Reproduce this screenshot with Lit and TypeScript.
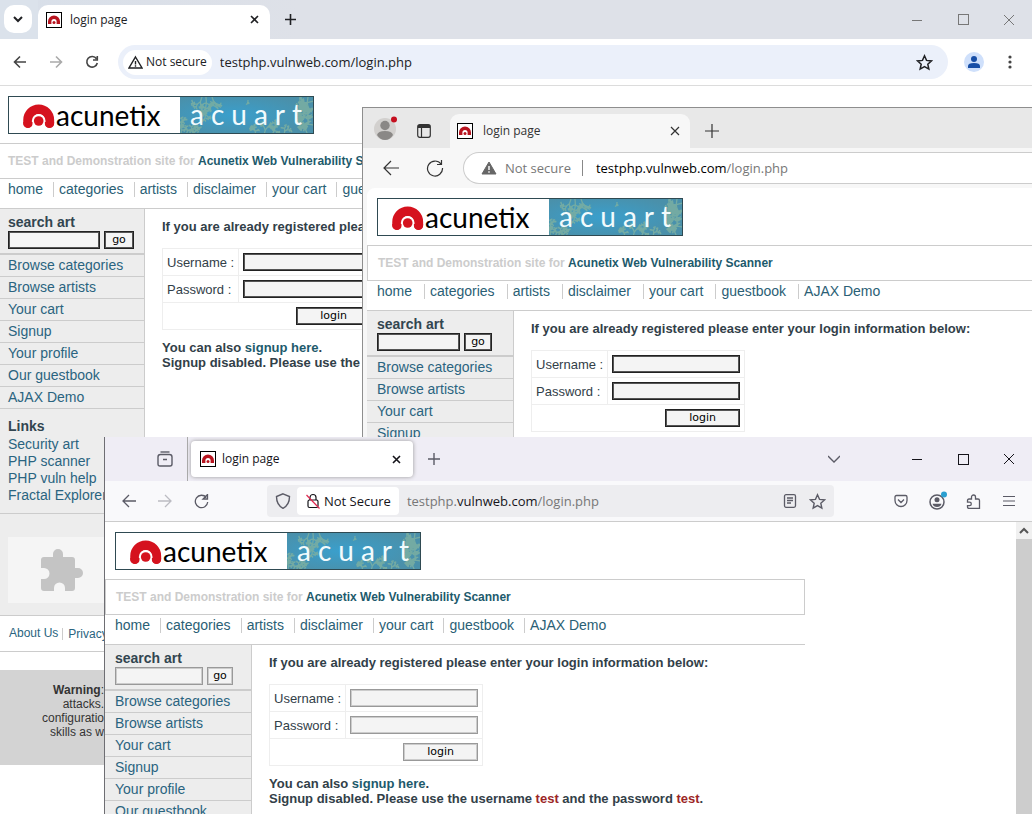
import { LitElement, html, svg, css, nothing } from "lit";
import { customElement, property } from "lit/decorators.js";

const ui = css`
  * { box-sizing: border-box; }
  button { border: 0; padding: 0; background: none; color: inherit; font: inherit; display: flex; align-items: center; justify-content: center; flex: none; }
  svg { display: block; flex: none; }
  .chrome { font-family: "Open Sans", "Noto Sans", sans-serif; font-size: 12px; line-height: 16px; color: #202124; white-space: nowrap; }
  .row { display: flex; align-items: center; }
  .grow { flex: 1; min-width: 0; }
  .url { border: 0; outline: 0; padding: 0; background: none; color: inherit; font-family: "Open Sans", "Noto Sans", sans-serif; font-size: 13px; line-height: 18px; flex: 1; min-width: 0; }
`;

const icon = (size: number, body: unknown, sw = 1) => html`<svg width=${size} height=${size} viewBox="0 0 ${size} ${size}" fill="none" stroke="currentColor" stroke-width=${sw} aria-hidden="true">${body}</svg>`;

const favicon = html`<svg width="16" height="16" viewBox="0 0 16 16" aria-hidden="true">
  <rect x=".5" y=".5" width="15" height="15" fill="#fff" stroke="#000"/>
  <path d="M3.700 12V9.500a4.300 4.300 0 0 1 8.600 0V12" fill="none" stroke="#b8141f" stroke-width="3.400"/>
  <circle cx="8" cy="10.400" r="1.500" fill="#b8141f"/></svg>`;

const cross = (s: number, sw: number) => icon(s, svg`<path d="M1 1L${s - 1} ${s - 1}M${s - 1} 1L1 ${s - 1}"/>`, sw);
const plus = (s: number, sw: number) => icon(s, svg`<path d="M${s / 2} 0V${s}M0 ${s / 2}H${s}"/>`, sw);
const dash = icon(10, svg`<path d="M0 5.500H10"/>`);
const box = icon(11, svg`<rect x=".5" y=".5" width="10" height="10"/>`);
const star = (s: number, sw: number) => html`<svg width=${s} height=${s} viewBox="0 0 16 16" fill="none" stroke="currentColor" stroke-width=${sw} stroke-linejoin="miter" aria-hidden="true"><path d="M8 1.700l1.900 4.300 4.700.5-3.500 3.100 1 4.600L8 11.800l-4.100 2.400 1-4.600L1.400 6.500 6.100 6z"/></svg>`;

/* Branching growth used for the texture of the banner. */
const fractal = (() => {
  let seed = 7;
  const rnd = () => (seed = (seed * 16807) % 2147483647) / 2147483647;
  let d = "";
  const grow = (x: number, y: number, a: number, len: number) => {
    if (len < 0.8) return;
    const nx = x + Math.cos(a) * len, ny = y + Math.sin(a) * len;
    d += `M${x.toFixed(1)} ${y.toFixed(1)}L${nx.toFixed(1)} ${ny.toFixed(1)}`;
    grow(nx, ny, a + (rnd() - 0.3) * 1.4, len * 0.74);
    grow(nx, ny, a - (rnd() - 0.1) * 1.6, len * 0.66);
    if (rnd() > 0.5) grow(nx, ny, a + 1.4, len * 0.5);
  };
  const roots = [[1, 38, -1.5, 5], [6, 38, -1.2, 5], [12, 38, -0.8, 4], [0, 26, -0.6, 3], [22, 0, 1.9, 5], [26, 0, 1.5, 6], [32, 0, 1.2, 5], [27, 14, 1.9, 4], [76, 38, -1.8, 4], [84, 38, -1.3, 5], [92, 38, -1.1, 5], [68, 3, 1.6, 2], [134, 4, 2.9, 6], [134, 12, 3.0, 6], [134, 20, 3.2, 6], [134, 28, 3.3, 6], [128, 38, -2, 5], [120, 0, 1.6, 5], [128, 0, 1.7, 6], [104, 38, -1.4, 4]];
  for (const [x, y, a, l] of roots) grow(x, y, a, l);
  return d;
})();

@customElement("shop-page")
class ShopPage extends LitElement {
  @property({ type: Boolean }) full = false;

  static styles = css`
    * { box-sizing: border-box; }
    :host { display: block; background: #fff; color: #333; font-family: "Liberation Sans", Arial, sans-serif; font-size: 13px; line-height: 15px; white-space: nowrap; overflow: hidden; --pad: 10px; --side: 147px; --find: 88px; --go: 26px; --gap: 10px; --line: #222; --soft: #555; }
    :host(.first) { --pad: 8px; --side: 145px; --find: 92px; --go: 30px; }
    :host(.first) .tag { border-left: 0; }
    :host(.second) { --find: 83px; --go: 28px; --gap: 12px; }
    :host(.third) { --line: #999; --soft: #ccc; }
    a { color: #2a6480; text-decoration: none; }
    .page { width: 700px; }
    .logo { display: flex; width: 306px; height: 38px; margin: 10px 0 9px var(--pad); border: 1px solid #2f4a52; }
    .left { flex: 1; display: flex; align-items: center; padding-left: 13px; color: #000; font: 28px/32px Lato, sans-serif; }
    .right { display: grid; width: 133px; background: #3f97bd; overflow: hidden; }
    .right > * { grid-area: 1 / 1; }
    .art { color: #f2fbfd; font: 28px/34px Lato, sans-serif; letter-spacing: 7px; padding-left: 10px; }
    svg { display: block; flex: none; }
    .tag { height: 36px; border: 1px solid #ccc; display: flex; align-items: center; padding-left: var(--pad); font-weight: bold; font-size: 12px; color: #ccc; white-space: pre; }
    .tag a { color: #1d5a6c; }
    .nav { display: flex; height: 30px; padding: 3px 0 0 var(--pad); border-bottom: 1px solid #ccc; font-size: 14px; }
    .nav a { height: 15px; padding-right: var(--gap); margin-right: 5px; border-right: 1px solid #ccc; color: #2a6075; }
    .nav a:last-child { border: 0; }
    .cols { display: flex; align-items: flex-start; }
    .side { width: var(--side); flex: none; background: #ededed; border-right: 1px solid #ccc; font-size: 14px; line-height: 17px; }
    .search { height: 46px; border-bottom: 2px solid #ccc; padding: 5px 0 0 var(--pad); }
    h2 { margin: 0; font-size: 14px; line-height: 17px; color: #324550; }
    .find { display: flex; gap: 4px; }
    .find input { width: var(--find); }
    .find button { width: var(--go); }
    input, button { height: 18px; margin: 0; padding: 0; border: 1px solid var(--line); border-radius: 0; background: #f4f4f4; box-shadow: inset 0 0 0 1px var(--soft); color: #000; font: 11px/14px "DejaVu Sans", sans-serif; }
    .list { list-style: none; margin: 0; padding: 0; }
    .list li { height: 22px; padding: 2px 0 0 var(--pad); border-bottom: 1px solid #ccc; }
    .links { padding: 8px 0 8px var(--pad); height: 105px; border-bottom: 1px solid #ccc; }
    .links h2 { line-height: 19px; }
    .links a { display: block; line-height: 17px; }
    .plug { height: 102px; padding: 23px 0 0 8px; border-bottom: 1px solid #ccc; }
    .plug div { height: 66px; background: #f5f5f5; display: flex; justify-content: center; align-items: center; padding-right: 28px; }
    .main { padding: 10px 0 0 17px; font-weight: bold; color: #324048; }
    p { margin: 0; }
    table { border-collapse: collapse; margin: 14px 0 10px; font-weight: normal; }
    td { border: 1px solid #eee; height: 27px; padding: 0 4px; }
    td input { display: block; width: 128px; }
    td button { display: block; width: 75px; margin-left: auto; }
    .main a { color: #1d5a6c; }
    .red { color: #9c2626; }
    .foot { height: 36px; border-bottom: 1px solid #ccc; display: flex; align-items: center; padding-left: 9px; font-size: 12px; }
    .foot a + a { border-left: 1px solid #ccc; margin-left: 4px; padding-left: 5px; line-height: 12px; }
    .warn { margin-top: 18px; padding-top: 13px; height: 95px; background: #d3d3d3; font-size: 12px; line-height: 14px; }
    .warn p { width: 104px; text-align: right; }
  `;

  render() {
    const sections = ["Browse categories", "Browse artists", "Your cart", "Signup", "Your profile", "Our guestbook", "AJAX Demo"];
    return html`<div class="page">
      <div class="logo">
        <div class="left">
          <svg width="34" height="30" viewBox="0 0 34 30" aria-hidden="true">
            <path d="M6 23V20a10.700 10.700 0 0 1 21.400 0V23" fill="none" stroke="#d5121e" stroke-width="9.500" stroke-linecap="round"/>
            <path d="M9.900 29V20.800a6.800 6.800 0 0 1 13.600 0V29z" fill="#fff"/>
            <path d="M1.300 22h9.200v2a4.600 4 0 0 1-9.200 0zM22.900 22h9.200v2a4.600 4 0 0 1-9.200 0z" fill="#d5121e"/>
            <circle cx="16.700" cy="21" r="4.800" fill="#d5121e"/>
          </svg><span>acunetix</span>
        </div>
        <div class="right">
          <svg width="133" height="36" viewBox="0 0 133 36" aria-hidden="true">
            <defs><radialGradient id="g" cx=".4" cy=".5" r=".6"><stop offset="0" stop-color="#3a9fcc"/><stop offset="1" stop-color="#4a90aa"/></radialGradient></defs>
            <rect width="133" height="36" fill="url(#g)"/>
            <path d=${fractal} stroke="#78ada2" stroke-width="1.300" fill="none" opacity=".9"/>
          </svg>
          <span class="art">acuart</span>
        </div>
      </div>
      <div class="tag">TEST and Demonstration site for <a href="#">Acunetix Web Vulnerability Scanner</a></div>
      <nav class="nav">${["home", "categories", "artists", "disclaimer", "your cart", "guestbook", "AJAX Demo"].map((t) => html`<a href="#">${t}</a>`)}</nav>
      <div class="cols">
        <div class="side">
          <div class="search"><h2 id="s">search art</h2><div class="find"><input type="text" aria-labelledby="s" /><button>go</button></div></div>
          <ul class="list">${sections.map((t) => html`<li><a href="#">${t}</a></li>`)}</ul>
          ${this.full ? html`<div class="links"><h2>Links</h2>${["Security art", "PHP scanner", "PHP vuln help", "Fractal Explorer"].map((t) => html`<a href="#">${t}</a>`)}</div>
          <div class="plug"><div><svg width="46" height="46" viewBox="0 0 46 46" fill="#c4c4c4" aria-hidden="true"><path d="M5 10H14V7a5 5 0 0 1 10 0V10H33q3 0 3 3V21H39a5 5 0 0 1 0 10H36V41q0 3-3 3H26V41a5.500 5.500 0 0 0-11 0V44H5q-3 0-3-3V32H5a5.500 5.500 0 0 0 0-11H2V13q0-3 3-3z"/></svg></div></div>` : nothing}
        </div>
        <div class="main">
          <p>If you are already registered please enter your login information below:</p>
          <table>
            <tr><td><label for="u">Username :</label></td><td><input id="u" type="text" /></td></tr>
            <tr><td><label for="p">Password :</label></td><td><input id="p" type="password" /></td></tr>
            <tr><td colspan="2"><button>login</button></td></tr>
          </table>
          <p>You can also <a href="#">signup here</a>.</p>
          <p>Signup disabled. Please use the username <span class="red">test</span> and the password <span class="red">test</span>.</p>
        </div>
      </div>
      ${this.full ? html`<div class="foot"><a href="#">About Us</a><a href="#">Privacy Policy</a></div>
      <div class="warn"><p><b>Warning</b>:</p><p>attacks.</p><p>configuratio</p><p>skills as w</p></div>` : nothing}
    </div>`;
  }
}

@customElement("chrome-window")
class ChromeWindow extends LitElement {
  static styles = [ui, css`
    :host { display: flex; flex-direction: column; background: #fff; }
    .strip { height: 39px; background: linear-gradient(90deg, #d8dfe9, #dee1e8 300px); }
    .menu { width: 38px; height: 39px; background: #dbe2eb; padding: 5px 0 0 4px; }
    .menu button { width: 28px; height: 28px; border-radius: 10px; background: #fff; }
    .tab { width: 232px; height: 34px; align-self: flex-end; background: #fff; border-radius: 10px 10px 0 0; padding: 0 11px 5px 8px; gap: 8px; }
    .new { width: 40px; }
    .ctl { width: 46px; height: 39px; color: #777; }
    .bar { height: 47px; border-bottom: 1px solid #dcdcdc; background: #fff; padding: 0 12px 0 2px; }
    .nav { width: 36px; color: #444; }
    .off { color: #aaa; }
    .omni { height: 34px; border-radius: 17px; background: #ebf0fa; margin-left: 8px; padding: 0 15px 0 5px; }
    .chip { height: 25px; border-radius: 13px; background: #fff; padding: 0 5px; gap: 3px; margin-right: 8px; }
    .me { width: 20px; height: 20px; border-radius: 10px; background: #cfe0fb; margin: 0 16px; color: #174ea6; }
    .dots { width: 20px; }
  `];
  render() {
    return html`<div class="chrome">
      <div class="strip row">
        <div class="menu"><button aria-label="Search tabs">${icon(10, svg`<path d="M1 3l4 4 4-4"/>`, 2)}</button></div>
        <div class="tab row">${favicon}<span class="grow">login page</span><button aria-label="Close tab">${cross(9, 1.6)}</button></div>
        <button class="new" aria-label="New tab">${plus(11, 1.6)}</button><span class="grow"></span>
        <button class="ctl" aria-label="Minimize">${dash}</button><button class="ctl" aria-label="Maximize">${box}</button><button class="ctl" aria-label="Close">${cross(12, 1)}</button>
      </div>
      <div class="bar row">
        <button class="nav" aria-label="Back">${icon(14, svg`<path d="M13 7H2M7 1.500L1.500 7 7 12.500"/>`, 1.6)}</button>
        <button class="nav off" aria-label="Forward">${icon(14, svg`<path d="M1 7H12M7 1.500L12.500 7 7 12.500"/>`, 1.6)}</button>
        <button class="nav" aria-label="Reload">${icon(14, svg`<path d="M11.500 3.800A5.300 5.300 0 1 0 12.300 8M12.300 1v4H8"/>`, 1.6)}</button>
        <div class="omni row grow">
          <button class="chip row">${icon(15, svg`<path d="M7.500 2L14 13H1zM7.500 6v3.500M7.500 10.300v1.500"/>`, 1.4)}Not secure</button>
          <input class="url" aria-label="Address" .value=${"testphp.vulnweb.com/login.php"} />
          <button aria-label="Bookmark">${star(17, 1.4)}</button>
        </div>
        <button class="me" aria-label="Profile"><svg width="12" height="12" fill="currentColor" aria-hidden="true"><circle cx="6" cy="3" r="3"/><path d="M0 12V10q0-3 6-3t6 3v2z"/></svg></button>
        <button class="dots" aria-label="Menu"><svg width="4" height="14" fill="#444" aria-hidden="true"><circle cx="2" cy="2" r="1.600"/><circle cx="2" cy="7" r="1.600"/><circle cx="2" cy="12" r="1.600"/></svg></button>
      </div>
    </div>
    <shop-page class="first" full></shop-page>`;
  }
}

@customElement("edge-window")
class EdgeWindow extends LitElement {
  static styles = [ui, css`
    :host { display: flex; flex-direction: column; overflow: hidden; background: #f7f7f7; border: 1px solid #8e8e8e; border-width: 1px 0 0 1px; }
    .strip { height: 40px; background: #e8e8e8; color: #333; }
    .me { width: 44px; height: 40px; }
    .side { width: 33px; margin-right: 10px; padding-top: 6px; }
    .tab { height: 34px; width: 240px; align-self: flex-end; background: #f7f7f7; border-radius: 9px 9px 0 0; padding: 0 10px 0 7px; gap: 10px; }
    .new { width: 44px; padding-top: 6px; }
    .bar { height: 40px; }
    .nav { width: 44px; color: #333; }
    .back { margin-left: 6px; }
    .omni { height: 32px; border: 1px solid #ccc; border-right: 0; border-radius: 16px 0 0 16px; background: #fff; margin-left: 6px; padding-left: 17px; color: #000; }
    .state { gap: 8px; font-size: 13px; color: #777; padding-right: 11px; border-right: 1px solid #888; height: 16px; margin-right: 13px; }
    .url span { color: #777; }
    .view { margin-left: 4px; border-radius: 8px 0 0 0; overflow: hidden; }
  `];
  render() {
    return html`<div class="chrome">
      <div class="strip row">
        <button class="me" aria-label="Profile"><svg width="26" height="24" aria-hidden="true"><circle cx="13" cy="13" r="11" fill="#d2d0ce"/><circle cx="13" cy="9.500" r="4.700" fill="#8a8886"/><path d="M5 19q1-4 8-4t8 4q-3 5-8 5t-8-5z" fill="#8a8886"/><circle cx="22" cy="3.500" r="3" fill="#c50f1f"/></svg></button>
        <button class="side" aria-label="Tab actions">${icon(14, svg`<rect x=".7" y=".7" width="12.600" height="12.600" rx="2"/><path d="M1 2.500H13" stroke-width="3"/><path d="M4.500 4V13"/>`, 1.2)}</button>
        <div class="tab row">${favicon}<span class="grow">login page</span><button aria-label="Close tab">${cross(10, 1.2)}</button></div>
        <button class="new" aria-label="New tab">${plus(14, 1.2)}</button>
      </div>
      <div class="bar row">
        <button class="nav back" aria-label="Back">${icon(16, svg`<path d="M16 8H1M8 1L1 8l7 7"/>`, 1.2)}</button>
        <button class="nav" aria-label="Reload">${icon(18, svg`<path d="M15 5A7.500 7.500 0 1 0 16.500 9M15.500 1v4.500H11"/>`, 1.2)}</button>
        <div class="omni row grow">
          <span class="state row"><svg width="16" height="14" aria-hidden="true"><path d="M8 1L15 13H1z" fill="#666" stroke="#666" stroke-linejoin="round"/><path d="M8 5v4M8 10.300v1.500" stroke="#fff" stroke-width="1.400"/></svg>Not secure</span>
          <div class="url" role="textbox" contenteditable="true" aria-label="Address">testphp.vulnweb.com<span>/login.php</span></div>
        </div>
      </div>
    </div>
    <div class="view"><shop-page class="second"></shop-page></div>`;
  }
}

@customElement("fox-window")
class FoxWindow extends LitElement {
  static styles = [ui, css`
    :host { display: flex; flex-direction: column; overflow: hidden; background: #fff; border-left: 1px solid #6e6e73; color: #5b5b66; }
    .strip { height: 44px; background: #efedf5; color: #15141a; }
    .view { width: 83px; height: 44px; border-right: 1px solid #aaa; padding-left: 52px; color: #5b5b66; }
    .tab { width: 222px; height: 36px; margin-left: 3px; background: #fff; border-radius: 4px; box-shadow: 0 0 4px #999; padding: 0 12px 0 9px; gap: 6px; }
    .new { width: 42px; color: #5b5b66; }
    .all { width: 40px; margin-right: 40px; color: #5b5b66; }
    .ctl { width: 46px; height: 44px; }
    .bar { height: 41px; background: #f9f9fb; border-bottom: 1px solid #ccc; color: #5b5b66; padding-left: 6px; padding-right: 5px; }
    .nav { width: 36px; }
    .off { color: #bcbcc2; }
    .omni { height: 32px; background: #ededf0; border-radius: 4px; padding: 0 8px; margin: 0 48px; flex: 0 1 567px; }
    .chip { height: 28px; border-radius: 4px; background: #fff; padding: 0 8px; gap: 3px; font-size: 13px; color: #15141a; margin: 0 8px 0 6px; }
    .url { color: #777; }
    .url span { color: #15141a; }
    .pair { gap: 12px; }
    .tools button { width: 36px; }
    .body { flex: 1; min-height: 0; display: flex; }
    .scroll { width: 16px; background: #cdcdcd; }
    .up { width: 16px; height: 17px; background: #f0f0f0; color: #555; }
  `];
  render() {
    return html`<div class="chrome">
      <div class="strip row">
        <div class="view row"><button aria-label="Recent browsing">${icon(16, svg`<path d="M3.500 1H12.500"/><path d="M1 6Q1 3.500 3.500 3.500H12.500Q15 3.500 15 6V13Q15 15 13 15H3Q1 15 1 13zM6 8.500H10"/>`, 1.4)}</button></div>
        <div class="tab row">${favicon}<span class="grow">login page</span><button aria-label="Close tab">${cross(9, 1.6)}</button></div>
        <button class="new" aria-label="New tab">${plus(12, 1.4)}</button><span class="grow"></span>
        <button class="all" aria-label="List all tabs">${icon(12, svg`<path d="M0 3l6 6 6-6"/>`, 1.3)}</button>
        <button class="ctl" aria-label="Minimize">${dash}</button><button class="ctl" aria-label="Maximize">${box}</button><button class="ctl" aria-label="Close">${cross(12, 1)}</button>
      </div>
      <div class="bar row">
        <button class="nav" aria-label="Back">${icon(14, svg`<path d="M14 7H1M7 1L1 7l6 6"/>`, 1.3)}</button>
        <button class="nav off" aria-label="Forward">${icon(14, svg`<path d="M0 7H13M7 1L13 7l-6 6"/>`, 1.3)}</button>
        <button class="nav" aria-label="Reload">${icon(15, svg`<path d="M12.300 3.500A6.200 6.200 0 1 0 13.700 8M13.500 .5V5H9z"/>`, 1.3)}</button>
        <div class="omni row">
          ${icon(16, svg`<path d="M8 .8L14.500 3.500Q14.500 12 8 15.300 1.500 12 1.500 3.500z"/>`, 1.4)}
          <button class="chip row">${icon(16, svg`<path d="M5 7V4.500a3 3 0 0 1 6 0V7"/><rect x="3" y="7" width="10" height="7.500" rx="1.500"/><path d="M1.500 2L14.500 15.500" stroke="#e22850"/>`, 1.2)}Not Secure</button>
          <div class="url" role="textbox" contenteditable="true" aria-label="Address">testphp.<span>vulnweb.com</span>/login.php</div>
          <span class="row pair"><button aria-label="Reader view">${icon(14, svg`<rect x="1.500" y=".7" width="11" height="12.600" rx="1.500"/><path d="M4 4H10M4 6.500H10M4 9H8"/>`, 1.3)}</button><button aria-label="Bookmark">${star(17, 1.3)}</button></span>
        </div>
        <span class="grow"></span>
        <span class="row tools">
          <button aria-label="Pocket">${icon(14, svg`<path d="M1 3Q1 1.500 2.500 1.500H11.500Q13 1.500 13 3V6.500a6 6 0 0 1-12 0zM4 5.500l3 3 3-3"/>`, 1.3)}</button>
          <button aria-label="Account"><svg width="20" height="20" aria-hidden="true"><circle cx="10" cy="11" r="7" fill="none" stroke="#5b5b66" stroke-width="1.500"/><circle cx="10" cy="8.800" r="2.500" fill="#5b5b66"/><path d="M5.500 12.700h9q-1 3.300-4.500 3.300t-4.500-3.300z" fill="#5b5b66"/><circle cx="17" cy="3.500" r="3" fill="#2a9fd0"/></svg></button>
          <button aria-label="Extensions">${icon(15, svg`<path d="M1.500 7V6.500Q1.500 5 3 5H5.500V3a2 2 0 0 1 4 0V5H12Q13.500 5 13.500 6.500V14.300H3Q1.500 14.300 1.500 12.800V11.700H3.500a1.800 1.800 0 0 0 0-3.600H1.500z"/>`, 1.3)}</button>
          <button aria-label="Menu">${icon(12, svg`<path d="M0 1.500H12M0 6H12M0 10.500H12"/>`, 1.2)}</button>
        </span>
      </div>
    </div>
    <div class="body"><shop-page class="third grow"></shop-page><div class="scroll"><button class="up" aria-label="Scroll up">${icon(10, svg`<path d="M1 7l4-4 4 4"/>`, 2)}</button></div></div>`;
  }
}

@customElement("app-root")
class AppRoot extends LitElement {
  static styles = css`
    :host { display: block; position: relative; height: 100vh; overflow: hidden; background: #fff; }
    .edge { position: absolute; left: 362px; right: 0; top: 107px; bottom: 0; }
    .fox { position: absolute; left: 104px; right: 0; top: 437px; bottom: 0; }
  `;
  render() {
    return html`<chrome-window></chrome-window><edge-window class="edge"></edge-window><fox-window class="fox"></fox-window>`;
  }
}
